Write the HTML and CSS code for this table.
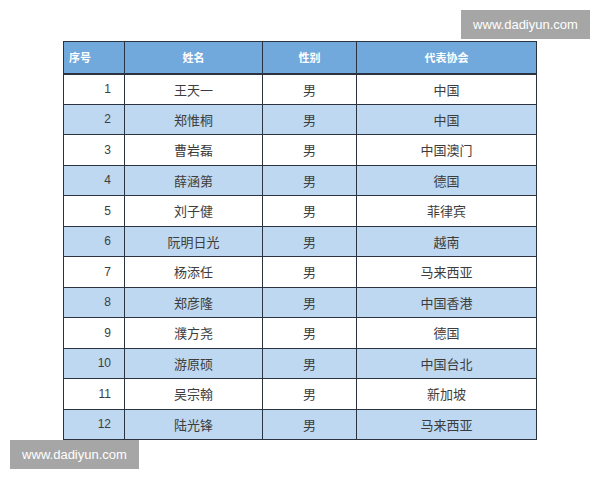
FILE: index.html
```html
<!DOCTYPE html>
<html lang="zh">
<head>
<meta charset="utf-8">
<link rel="stylesheet" href="styles.css">
</head>
<body>
<div class="page">
  <table class="players">
    <colgroup>
      <col class="w-no"><col class="w-name"><col class="w-sex"><col class="w-assoc">
    </colgroup>
    <thead>
      <tr><th class="c-no">序号</th><th>姓名</th><th>性别</th><th>代表协会</th></tr>
    </thead>
    <tbody>
      <tr><td class="c-no">1</td><td>王天一</td><td>男</td><td>中国</td></tr>
      <tr class="alt"><td class="c-no">2</td><td>郑惟桐</td><td>男</td><td>中国</td></tr>
      <tr><td class="c-no">3</td><td>曹岩磊</td><td>男</td><td>中国澳门</td></tr>
      <tr class="alt"><td class="c-no">4</td><td>薛涵第</td><td>男</td><td>德国</td></tr>
      <tr><td class="c-no">5</td><td>刘子健</td><td>男</td><td>菲律宾</td></tr>
      <tr class="alt"><td class="c-no">6</td><td>阮明日光</td><td>男</td><td>越南</td></tr>
      <tr><td class="c-no">7</td><td>杨添任</td><td>男</td><td>马来西亚</td></tr>
      <tr class="alt"><td class="c-no">8</td><td>郑彦隆</td><td>男</td><td>中国香港</td></tr>
      <tr><td class="c-no">9</td><td>濮方尧</td><td>男</td><td>德国</td></tr>
      <tr class="alt"><td class="c-no">10</td><td>游原硕</td><td>男</td><td>中国台北</td></tr>
      <tr><td class="c-no">11</td><td>吴宗翰</td><td>男</td><td>新加坡</td></tr>
      <tr class="alt"><td class="c-no">12</td><td>陆光锋</td><td>男</td><td>马来西亚</td></tr>
    </tbody>
  </table>
  <div class="wm wm-top">www.dadiyun.com</div>
  <div class="wm wm-bottom">www.dadiyun.com</div>
</div>
</body>
</html>
```
FILE: styles.css
```css
html, body {
  margin: 0;
  padding: 0;
  background: #ffffff;
}
body {
  width: 600px;
  height: 480px;
  overflow: hidden;
  font-family: "Liberation Sans", "Noto Sans CJK SC", sans-serif;
}
.page {
  position: relative;
  width: 600px;
  height: 480px;
  padding: 41px 0 0 63px;
  box-sizing: border-box;
}
.players {
  border-collapse: collapse;
  table-layout: fixed;
  width: 473px;
  border: 1px solid #2b3340;
}
.w-no { width: 61px; }
.w-name { width: 138px; }
.w-sex { width: 94px; }
.w-assoc { width: 180px; }
.players th,
.players td {
  box-sizing: border-box;
}
.players th {
  height: 32px;
  background: #72a9dd;
  color: #ffffff;
  font-size: 11px;
  font-weight: bold;
  text-align: center;
  border: 1px solid #2b3340;
  border-bottom: 2px solid #2b3340;
  padding: 0;
}
.players th.c-no {
  text-align: left;
  padding-left: 5px;
}
.players td {
  height: 30.5px;
  padding: 0;
  font-size: 13px;
  color: #3d3d3d;
  text-align: center;
  border-left: 1.5px solid #2b3340;
  border-right: 1.5px solid #2b3340;
  border-bottom: 1px solid #2b3340;
}
.players td.c-no {
  text-align: right;
  padding-right: 13px;
  font-size: 12px;
}
.players tr.alt td {
  background: #bdd8f0;
}
.wm {
  position: absolute;
  background: #a6a6a6;
  color: #ffffff;
  font-family: "Liberation Sans", sans-serif;
  font-size: 13px;
  height: 29px;
  line-height: 29px;
  text-align: center;
  width: 129px;
}
.wm-top {
  left: 461px;
  top: 10px;
}
.wm-bottom {
  left: 10px;
  top: 440px;
}
```
